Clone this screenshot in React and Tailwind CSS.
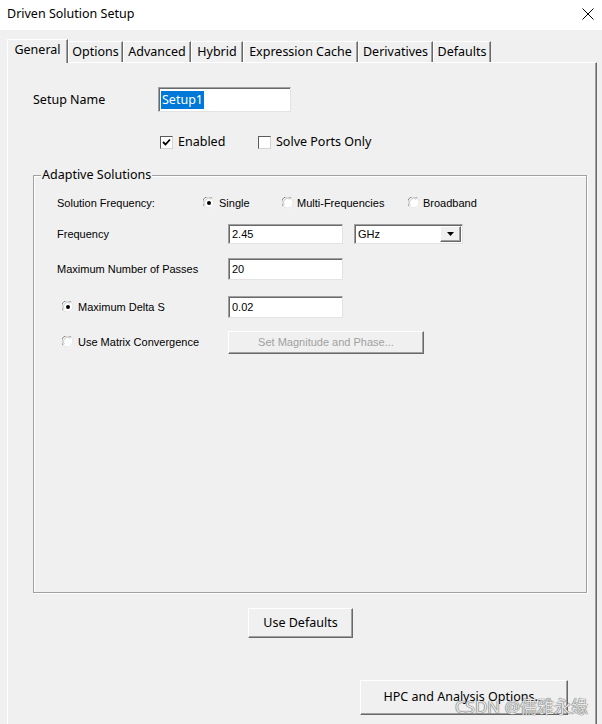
import React from 'react';

const ui = "font-['Noto_Sans',sans-serif]";
const dlg = "font-['Liberation_Sans',Arial,sans-serif]";

const Radio = ({ checked }) => (
  <svg width="12" height="12" viewBox="0 0 12 12" className="shrink-0">
    <circle cx="6" cy="6" r="5.5" fill="#fff" />
    <path d="M1.3 9.3 A5.5 5.5 0 0 1 9.3 1.3" fill="none" stroke="#8a8a8a" strokeWidth="1" />
    <path d="M9.3 1.3 A5.5 5.5 0 0 1 1.3 9.3" fill="none" stroke="#e3e3e3" strokeWidth="1" />
    <path d="M2.2 8.2 A4.3 4.3 0 0 1 8.2 2.2" fill="none" stroke="#c8c8c8" strokeWidth="1" />
    {checked && <circle cx="6" cy="6" r="2" fill="#000" />}
  </svg>
);

const Checkbox = ({ checked }) => (
  <div className="w-[13px] h-[13px] shrink-0 bg-white border border-t-[#5a5a5a] border-l-[#5a5a5a] border-r-[#d4d4d4] border-b-[#d4d4d4] flex items-center justify-center">
    {checked && (
      <svg width="9" height="9" viewBox="0 0 9 9">
        <path d="M1 4 L3.5 6.5 L8 1.5" fill="none" stroke="#000" strokeWidth="1.8" />
      </svg>
    )}
  </div>
);

const Field = ({ value, className = '' }) => (
  <div
    className={`bg-white border border-t-[#a0a0a0] border-l-[#a0a0a0] border-r-[#e3e3e3] border-b-[#e3e3e3] shadow-[inset_1px_1px_0_#696969] flex items-center pl-[3px] text-[11px] text-black ${className}`}
  >
    {value}
  </div>
);

const Button = ({ children, className = '', disabled }) => (
  <div
    className={`flex items-center justify-center bg-[#f0f0f0] border border-t-white border-l-white border-r-[#696969] border-b-[#696969] shadow-[inset_-1px_-1px_0_#a0a0a0] ${disabled ? 'text-[#a0a0a0]' : 'text-black'} ${className}`}
  >
    {children}
  </div>
);

const tabs = [
  { label: 'General', w: 'w-[61px]', active: true },
  { label: 'Options', w: 'w-[55px]' },
  { label: 'Advanced', w: 'w-[68px]' },
  { label: 'Hybrid', w: 'w-[52px]' },
  { label: 'Expression Cache', w: 'w-[115px]' },
  { label: 'Derivatives', w: 'w-[75px]' },
  { label: 'Defaults', w: 'w-[58px]' },
];

export default function App() {
  return (
    <div className={`relative w-[602px] h-[724px] overflow-hidden bg-[#f0f0f0] text-black ${ui}`}>
      {/* title bar */}
      <div className="h-[30px] bg-white flex items-center justify-between pl-[7px] pr-[8px] pb-[2px]">
        <span className="text-[12.5px]">Driven Solution Setup</span>
        <svg width="12" height="12" viewBox="0 0 12 12">
          <path d="M0.5 0.5 L11.5 11.5 M11.5 0.5 L0.5 11.5" stroke="#000" strokeWidth="1" />
        </svg>
      </div>

      <div className="pt-[9px]">
        {/* tabs */}
        <div className="flex items-end h-[23px] pl-[7px]">
          {tabs.map((t) =>
            t.active ? (
              <div
                key={t.label}
                className={`${t.w} h-[24px] -mb-px relative z-10 bg-[#f0f0f0] border-l border-t border-white border-r border-r-[#696969] shadow-[inset_-1px_0_0_#a0a0a0] flex items-start justify-center pt-[1px] text-[12.5px]`}
              >
                {t.label}
              </div>
            ) : (
              <div
                key={t.label}
                className={`${t.w} h-[21px] bg-[#f0f0f0] border-l border-t border-white border-r border-r-[#696969] shadow-[inset_-1px_0_0_#a0a0a0] flex items-center justify-center text-[12.5px]`}
              >
                {t.label}
              </div>
            )
          )}
        </div>

        {/* panel */}
        <div className="ml-[7px] w-[590px] h-[700px] border-l border-t border-white border-r border-r-[#696969] shadow-[inset_-1px_0_0_#a0a0a0] pl-[25px] pt-[24px]">
          <div className="flex items-center h-[25px]">
            <span className="w-[125px] text-[12.5px] pt-[2px]">Setup Name</span>
            <div className="w-[133px] h-[25px] bg-white border border-t-[#a0a0a0] border-l-[#a0a0a0] border-r-[#e3e3e3] border-b-[#e3e3e3] shadow-[inset_1px_1px_0_#696969] flex items-center pl-[2px]">
              <span className="bg-[#0078d7] text-white text-[12.5px] leading-[18px] px-[1px]">Setup1</span>
            </div>
          </div>

          <div className="flex items-center h-[18px] mt-[21px] pl-[127px] text-[12.5px]">
            <div className="flex items-center gap-[5px] w-[98px]">
              <Checkbox checked />
              <span>Enabled</span>
            </div>
            <div className="flex items-center gap-[5px]">
              <Checkbox />
              <span>Solve Ports Only</span>
            </div>
          </div>

          <fieldset className="mt-[15px] w-[554px] h-[427px] border border-[#a0a0a0] shadow-[1px_1px_0_#fff,inset_1px_1px_0_#fff]">
            <legend className="ml-[7px] px-[1px] h-[18px] leading-[18px] text-[12.5px] bg-[#f0f0f0]">Adaptive Solutions</legend>
            <div className={`pl-[23px] text-[11px] ${dlg}`}>
              <div className="flex items-center h-[18px] mt-[10px]">
                <span className="w-[146px]">Solution Frequency:</span>
                <div className="flex items-center gap-[4px] w-[79px]">
                  <Radio checked />
                  <span>Single</span>
                </div>
                <div className="flex items-center gap-[3px] w-[126px]">
                  <Radio />
                  <span>Multi-Frequencies</span>
                </div>
                <div className="flex items-center gap-[3px]">
                  <Radio />
                  <span>Broadband</span>
                </div>
              </div>

              <div className="flex items-center h-[20px] mt-[12px]">
                <span className="w-[171px]">Frequency</span>
                <Field value="2.45" className="w-[115px] h-[20px]" />
                <div className="ml-[11px] w-[109px] h-[20px] bg-white border border-t-[#a0a0a0] border-l-[#a0a0a0] border-r-[#e3e3e3] border-b-[#e3e3e3] shadow-[inset_1px_1px_0_#696969] flex items-center justify-between pl-[3px] pr-[1px]">
                  <span>GHz</span>
                  <Button className="w-[21px] h-[16px]">
                    <svg width="7" height="4" viewBox="0 0 7 4">
                      <path d="M0 0 H7 L3.5 4 Z" fill="#000" />
                    </svg>
                  </Button>
                </div>
              </div>

              <div className="flex items-center h-[22px] mt-[14px]">
                <span className="w-[171px] pt-[1px]">Maximum Number of Passes</span>
                <Field value="20" className="w-[115px] h-[22px]" />
              </div>

              <div className="flex items-center h-[22px] mt-[16px]">
                <div className="w-[171px] flex items-center gap-[4px] pl-[5px]">
                  <Radio checked />
                  <span>Maximum Delta S</span>
                </div>
                <Field value="0.02" className="w-[115px] h-[22px]" />
              </div>

              <div className="flex items-center h-[22px] mt-[13px]">
                <div className="w-[171px] flex items-center gap-[4px] pl-[5px]">
                  <Radio />
                  <span>Use Matrix Convergence</span>
                </div>
                <Button disabled className="w-[196px] h-[23px]">
                  Set Magnitude and Phase...
                </Button>
              </div>
            </div>
          </fieldset>

          <Button className="mt-[15px] ml-[215px] w-[105px] h-[30px] text-[12.5px]">Use Defaults</Button>
          <Button className="mt-[42px] ml-[327px] w-[208px] h-[35px] text-[12.5px]">HPC and Analysis Options...</Button>
        </div>
      </div>

      {/* watermark */}
      <div className="absolute right-[14px] bottom-[5px] text-[17px] text-[#e6e6e6] [text-shadow:0_0_1px_#555,0_0_1px_#555] font-['Noto_Sans','Noto_Sans_CJK_SC',sans-serif]">
        CSDN @儒雅永缘
      </div>
    </div>
  );
}
